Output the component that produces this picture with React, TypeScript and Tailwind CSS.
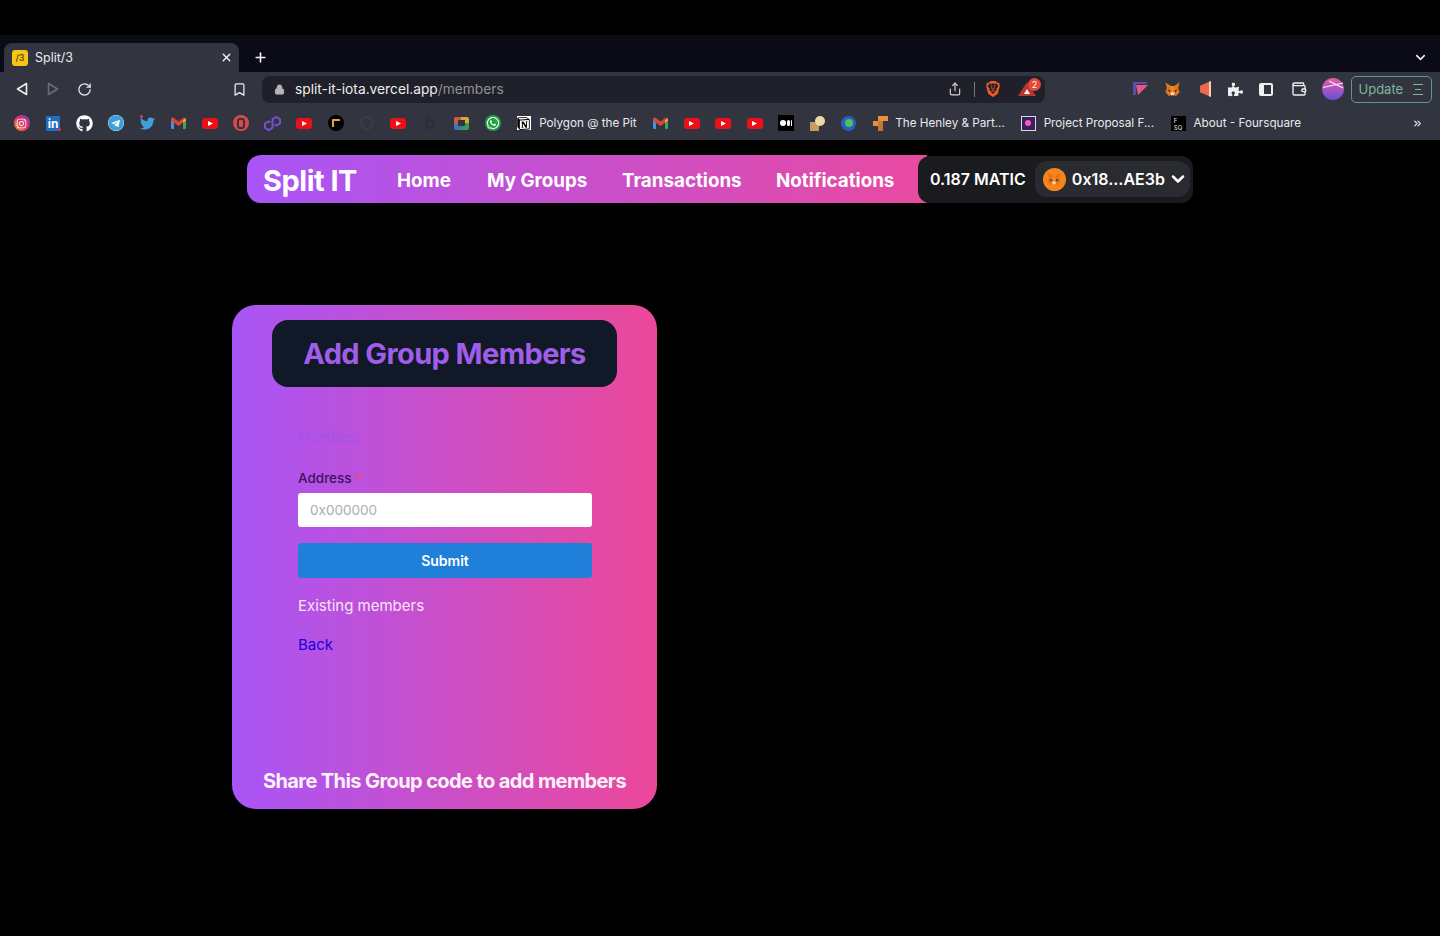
import React from 'react';
import { ChevronDown, Bookmark, RotateCw, Share, X, Plus, Lock, Wallet, ChevronsRight } from 'lucide-react';
import { FaGithub, FaTelegram, FaTwitter, FaWhatsapp, FaInstagram, FaPuzzlePiece } from 'react-icons/fa';
import { SiNotion, SiPolygon, SiBrave } from 'react-icons/si';

const Fox: React.FC<{ size?: number }> = ({ size = 16 }) => (
    <svg width={size} height={size} viewBox="0 0 24 24">
        <path d="M2 2l8 5h4l8-5-2 8 2 6-5 5-3-1h-4l-3 1-5-5 2-6z" fill="#e2761b" />
        <path d="M5 12l4 1-1 3zM19 12l-4 1 1 3z" fill="#3a2a1d" />
        <path d="M9 17l3-2 3 2-1 3h-4z" fill="#f0d9c0" />
        <path d="M10 7h4l1 6-3 2-3-2z" fill="#f6851b" />
    </svg>
);

const YouTube = () => (
    <span className="w-[16px] h-[11px] rounded-[3px] bg-[#ec0f18] flex items-center justify-center">
        <svg width="5" height="5" viewBox="0 0 5 5"><path d="M0 0l5 2.5L0 5z" fill="#fff" /></svg>
    </span>
);

const Gmail = () => (
    <svg width="15" height="12" viewBox="0 0 15 12">
        <path d="M0 1.5h3V12H1a1 1 0 0 1-1-1z" fill="#4a8fe0" />
        <path d="M12 1.5h3V11a1 1 0 0 1-1 1h-2z" fill="#3fa35a" />
        <path d="M0 1.5L1.8.3 7.5 4.6 13.2.3 15 1.5v2L7.5 9 0 3.500z" fill="#d9463a" />
        <path d="M12 3.200L15 1.500v2l-3 2.200z" fill="#eab13a" />
    </svg>
);

const Slot: React.FC<{ children?: React.ReactNode; label?: string; labelWidth?: string }> = ({ children, label, labelWidth }) => (
    <div className="flex items-center h-full shrink-0">
        <div className="w-[31.4px] flex justify-center items-center">{children}</div>
        {label && <span className={`text-[11.7px] pt-[1px] text-[#e8e9ec] whitespace-nowrap -ml-[0.5px] ${labelWidth}`}>{label}</span>}
    </div>
);

const BookmarksBar = () => (
    <div className="h-[34px] bg-[#32353f] flex items-center pl-[6px] pr-[16px]">
        <Slot><span className="w-4 h-4 rounded-full bg-linear-to-tr/srgb from-[#f9a825] via-[#e1306c] to-[#8a3ab9] flex items-center justify-center"><FaInstagram size={11} color="#fff" /></span></Slot>
        <Slot>
            <span className="relative w-[14px] h-[15px] bg-[#1e6fc0] text-white text-[12px] font-bold leading-[15px] text-center">
                in
                <span className="absolute -right-[1px] bottom-0 w-[3px] h-[3px] rounded-full bg-[#e0303a]" />
            </span>
        </Slot>
        <Slot><FaGithub size={17} color="#fff" /></Slot>
        <Slot><FaTelegram size={16} color="#3aa0d8" className="bg-white rounded-full" /></Slot>
        <Slot>
            <span className="relative">
                <FaTwitter size={15} color="#3f9fe0" />
                <span className="absolute left-0 -top-[1px] w-[3px] h-[3px] rounded-full bg-[#d8405a]" />
            </span>
        </Slot>
        <Slot><Gmail /></Slot>
        <Slot><YouTube /></Slot>
        <Slot><span className="w-4 h-4 rounded-full bg-[#d84a4a] flex items-center justify-center"><span className="w-[8px] h-[11px] rounded-[3px] border-2 border-[#32353f]" /></span></Slot>
        <Slot><SiPolygon size={17} color="#7a4fd0" /></Slot>
        <Slot><YouTube /></Slot>
        <Slot><span className="w-4 h-4 rounded-full bg-black flex items-center justify-center"><span className="w-[8px] h-[8px] border-t-2 border-l-2 border-[#e8a33c]" /></span></Slot>
        <Slot><span className="w-[14px] h-[14px] rounded-full border-2 border-[#3a3d46]" /></Slot>
        <Slot><YouTube /></Slot>
        <Slot><span className="text-[17px] leading-none font-semibold text-[#2a2d3f]">b</span></Slot>
        <Slot><span className="w-[15px] h-[13px] rounded-[2px] bg-[conic-gradient(#d9a92e_0_25%,#3c9a58_0_50%,#3a78b8_0_75%,#cc5a48_0)] flex items-center justify-center"><span className="w-[7px] h-[6px] bg-[#32353f]" /></span></Slot>
        <Slot><FaWhatsapp size={16} color="#fff" className="bg-[#25a244] rounded-full p-[1px]" /></Slot>
        <Slot label="Polygon @ the Pit" labelWidth="w-[105.5px]"><span className="w-[14px] h-[14px] bg-white flex items-center justify-center"><SiNotion size={13} color="#000" /></span></Slot>
        <Slot><Gmail /></Slot>
        <Slot><YouTube /></Slot>
        <Slot><YouTube /></Slot>
        <Slot><YouTube /></Slot>
        <Slot>
            <span className="w-[16px] h-[16px] bg-black flex items-center justify-center gap-[1px]">
                <span className="w-[6px] h-[6px] rounded-full bg-white" />
                <span className="w-[3px] h-[6px] rounded-full bg-white" />
                <span className="w-[1px] h-[6px] rounded-full bg-white" />
            </span>
        </Slot>
        <Slot>
            <span className="relative w-[15px] h-[15px]">
                <span className="absolute left-0 bottom-0 w-[9px] h-[9px] bg-[#c99a63]" />
                <span className="absolute right-0 top-0 w-[10px] h-[10px] rounded-full bg-[#ecd9a8]" />
            </span>
        </Slot>
        <Slot><span className="w-[15px] h-[15px] rounded-full bg-[#2a5fc0] flex items-center justify-center"><span className="w-[8px] h-[8px] rounded-full bg-[#4fc05a]" /></span></Slot>
        <Slot label="The Henley & Part..." labelWidth="w-[117.5px]">
            <span className="grid grid-cols-3 grid-rows-3 w-[15px] h-[15px]">
                <span /><span className="col-span-2 bg-[#e8903a]" />
                <span className="bg-[#e8903a]" /><span className="bg-[#c9772e]" /><span />
                <span /><span className="bg-[#c9772e]" /><span />
            </span>
        </Slot>
        <Slot label="Project Proposal F..." labelWidth="w-[119px]"><span className="w-[15px] h-[15px] border border-[#d8d8e0] bg-[#3a1f5c] flex items-center justify-center"><span className="w-[6px] h-[6px] rounded-full bg-[#f05cc0]" /></span></Slot>
        <Slot label="About - Foursquare"><span className="w-[15px] h-[15px] bg-black text-[#d8d8d8] text-[6px] leading-[7px] font-medium pl-[3px] pt-[1px]">F<br />SQ</span></Slot>
        <ChevronsRight size={11} color="#e8e9ec" strokeWidth={2.5} className="ml-auto mr-[1px]" />
    </div>
);

const Toolbar = () => (
    <div className="h-[34px] bg-[#32353f] flex items-center pl-[16px] pr-[8px]">
        <svg width="12" height="14" viewBox="0 0 12 14" fill="none" stroke="#eceded" strokeWidth="1.6"><path d="M10.5 1.5v11L1.5 7z" strokeLinejoin="round" /></svg>
        <svg width="12" height="14" viewBox="0 0 12 14" fill="none" stroke="#6b6e77" strokeWidth="1.5" className="ml-[19px]"><path d="M1.5 1.5v11l9-5.5z" strokeLinejoin="round" /></svg>
        <RotateCw size={15} color="#eceded" strokeWidth={2} className="ml-[18px]" />
        <Bookmark size={15} color="#eceded" strokeWidth={2} className="ml-[140px]" />
        <div className="ml-[15px] w-[783px] h-[27px] rounded-lg bg-[#1f2029] flex items-center pl-[12px] pr-[8px] shrink-0">
            <Lock size={11} color="#b4b5b9" fill="#b4b5b9" />
            <span className="ml-[10px] pt-[1px] text-[13.75px] text-[#eceded]">split-it-iota.vercel.app<span className="text-[#8f9198]">/members</span></span>
            <Share size={14} color="#d4d5d8" className="ml-auto" />
            <span className="ml-[12px] w-px h-[15px] bg-[#777a80]" />
            <SiBrave size={16} color="#f0592a" className="ml-[10px]" />
            <span className="relative ml-[17px] mr-[1px] w-0 h-0 border-l-[9px] border-r-[9px] border-b-[14px] border-l-transparent border-r-transparent border-b-[#b8352f]">
                <span className="absolute top-[7px] -left-[3px] w-0 h-0 border-l-[3px] border-r-[3px] border-b-[5px] border-l-transparent border-r-transparent border-b-white" />
                <span className="absolute -top-[4px] left-[1px] w-[13px] h-[13px] rounded-full bg-[#e5493a] text-white text-[9px] leading-[13px] text-center">2</span>
            </span>
        </div>
        <svg width="16" height="16" viewBox="0 0 16 16" className="ml-[88px]">
            <path d="M0 1h14l-1 2H3v11H0z" fill="#5a4fa8" />
            <path d="M3 4h12L5 14z" fill="#e8558c" />
        </svg>
        <span className="ml-[15px]"><Fox size={17} /></span>
        <span className="ml-[19px] w-[11px] h-[16px] bg-[#ec6a4a] border-r-2 border-[#f0d0c0] [clip-path:polygon(0_30%,100%_0,100%_100%,0_70%)]" />
        <FaPuzzlePiece size={15} color="#f0f0f2" className="ml-[17px]" />
        <span className="ml-[16px] w-[14px] h-[13px] rounded-[2px] border-2 border-[#f0f0f2] bg-[linear-gradient(to_right,#f0f0f2_30%,transparent_30%)]" />
        <Wallet size={16} color="#f0f0f2" strokeWidth={2} className="ml-[18px]" />
        <svg width="22" height="22" viewBox="0 0 22 22" className="ml-[14.5px]">
            <defs>
                <linearGradient id="avatarFill" x1="0" y1="0" x2="0" y2="1">
                    <stop offset="0" stopColor="#e85ba8" />
                    <stop offset="1" stopColor="#6a4fd8" />
                </linearGradient>
            </defs>
            <circle cx="11" cy="11" r="11" fill="url(#avatarFill)" />
            <path d="M1 9.500L21 5M7 3l14 7" stroke="#f6eef8" strokeWidth="1.100" fill="none" />
        </svg>
        <div className="ml-[7px] mt-[1px] w-[81px] h-[27px] rounded-[5px] border border-[#5f9a83] flex items-center pl-[7px]">
            <span className="text-[13px] text-[#79b89b]">Update</span>
            <span className="ml-[10px] flex flex-col gap-[3.5px] items-center">
                <span className="w-[10px] h-[1.5px] bg-[#79b89b]" />
                <span className="w-[6px] h-[1.5px] bg-[#79b89b]" />
                <span className="w-[10px] h-[1.5px] bg-[#79b89b]" />
            </span>
        </div>
    </div>
);

const BrowserChrome = () => (
    <div className="pt-[35px] bg-black">
        <div className="h-[37px] bg-[#0a0b16] flex items-end pl-[4px] pr-[12px]">
            <div className="w-[235px] h-[29px] rounded-t-lg bg-[#32353f] flex items-center pl-[8px] pr-[6px]">
                <span className="w-4 h-4 rounded-[3px] bg-[#f5c518] text-[#6b4a00] text-[9px] leading-4 text-center font-semibold">/3</span>
                <span className="ml-[7px] pt-[1px] text-[12.5px] text-[#eceded]">Split/3</span>
                <X size={13} color="#f0f0f2" strokeWidth={2.5} className="ml-auto" />
            </div>
            <Plus size={15} color="#f5f5f7" strokeWidth={2.5} className="ml-[14px] mb-[7px]" />
            <ChevronDown size={15} color="#f0f0f2" strokeWidth={2.5} className="ml-auto mb-[7px]" />
        </div>
        <Toolbar />
        <BookmarksBar />
    </div>
);

const Navbar = () => (
    <div className="pt-[15px] pl-[247px] flex items-center">
        <nav className="w-[680px] h-[48px] rounded-l-[14px] bg-linear-to-r/srgb from-[#a855f7] to-[#e94aa0] flex items-center pl-[16px] text-white font-bold">
            <span className="text-[29px] tracking-[-0.5px] w-[134px] leading-none pt-[3px]">Split IT</span>
            <a className="text-[18.8px] leading-none pt-[5px] w-[90px]">Home</a>
            <a className="text-[18.8px] leading-none pt-[5px] w-[135px]">My Groups</a>
            <a className="text-[18.8px] leading-none pt-[5px] w-[154px]">Transactions</a>
            <a className="text-[18.8px] leading-none pt-[5px]">Notifications</a>
        </nav>
        <div className="-ml-[9px] z-10 w-[275px] h-[47px] rounded-[12px] bg-[#1a1b1f] flex items-center pl-[12px] text-white font-semibold">
            <span className="text-[16px] whitespace-nowrap">0.187 MATIC</span>
            <div className="ml-[9px] w-[155px] h-[36px] rounded-[12px] bg-[#2a2b30] flex items-center pl-[8px]">
                <span className="w-[23px] h-[23px] rounded-full bg-[#f6851b] flex items-center justify-center"><Fox size={16} /></span>
                <span className="ml-[6px] text-[16px] whitespace-nowrap">0x18...AE3b</span>
                <ChevronDown size={20} color="#fff" strokeWidth={3} className="ml-[3px]" />
            </div>
        </div>
    </div>
);

const AddMembersCard = () => (
    <div className="ml-[232px] mt-[102px] w-[425px] h-[504px] rounded-[24px] bg-linear-to-r/srgb from-[#a855f7] to-[#ec4899] flex flex-col pt-[15px]">
        <div className="self-center w-[345px] h-[67px] rounded-2xl bg-[#111827] flex items-center justify-center">
            <h1 className="text-[29px] font-bold text-[#a05ee8] tracking-[-0.6px] leading-none">Add Group Members</h1>
        </div>
        <div className="ml-[66px] w-[294px] mt-[40px] flex flex-col">
            <span className="text-[14px] leading-5 text-[#a353ea] h-5">Members</span>
            <label className="mt-[21px] text-[13.5px] leading-5 font-medium text-[#3c1160]">Address <span className="text-[#e8506a]">*</span></label>
            <input
                placeholder="0x000000"
                className="mt-[5px] h-[34px] w-full rounded-[3px] bg-white pl-[12px] text-[13.5px] text-black placeholder:text-[#a8adb5] outline-none"
            />
            <button className="mt-[16px] h-[35px] rounded-[3px] bg-[#1f7fd9] text-white text-[14px] font-semibold">Submit</button>
            <p className="mt-[16px] text-[15px] leading-6 text-[#fbe3f5]">Existing members</p>
            <a className="mt-[15px] text-[15px] leading-6 text-[#2200dd]">Back</a>
        </div>
        <p className="mt-auto mb-[14px] text-center text-[20px] leading-7 font-bold text-[#fdf2fa] tracking-[-0.6px]">Share This Group code to add members</p>
    </div>
);

export default function App() {
    return (
        <div className="w-[1440px] h-[936px] overflow-hidden bg-black font-['Inter',sans-serif]">
            <BrowserChrome />
            <Navbar />
            <AddMembersCard />
        </div>
    );
}
